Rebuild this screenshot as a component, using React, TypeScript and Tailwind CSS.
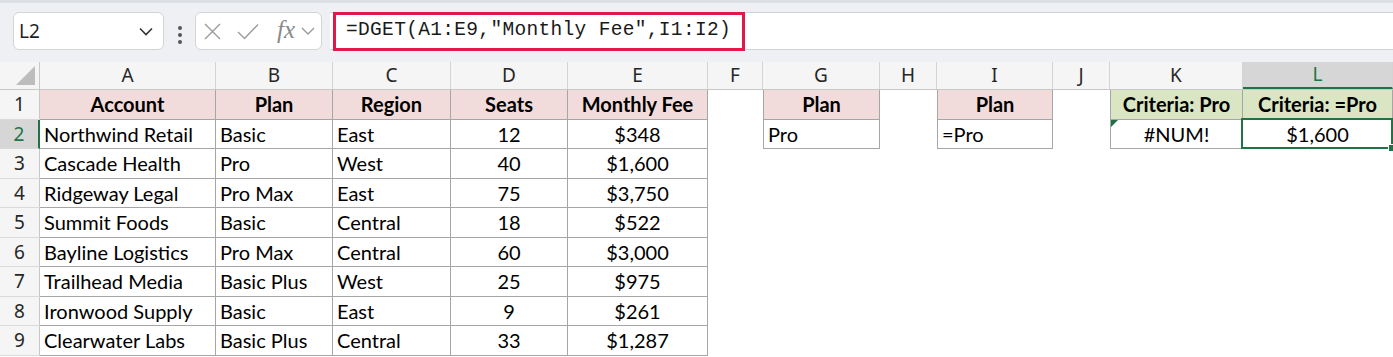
import React from 'react';

const cols = [
    { key: '', w: 40 },
    { key: 'A', w: 176 },
    { key: 'B', w: 117 },
    { key: 'C', w: 118 },
    { key: 'D', w: 117 },
    { key: 'E', w: 140 },
    { key: 'F', w: 55 },
    { key: 'G', w: 117 },
    { key: 'H', w: 57 },
    { key: 'I', w: 116 },
    { key: 'J', w: 57 },
    { key: 'K', w: 133 },
    { key: 'L', w: 150 },
];

const rows: [string, string, string, string, string][] = [
    ['Northwind Retail', 'Basic', 'East', '12', '$348'],
    ['Cascade Health', 'Pro', 'West', '40', '$1,600'],
    ['Ridgeway Legal', 'Pro Max', 'East', '75', '$3,750'],
    ['Summit Foods', 'Basic', 'Central', '18', '$522'],
    ['Bayline Logistics', 'Pro Max', 'Central', '60', '$3,000'],
    ['Trailhead Media', 'Basic Plus', 'West', '25', '$975'],
    ['Ironwood Supply', 'Basic', 'East', '9', '$261'],
    ['Clearwater Labs', 'Basic Plus', 'Central', '33', '$1,287'],
];

const cellFont = { fontFamily: 'Lato, "Open Sans", sans-serif' };

type CellProps = {
    w: number;
    children?: React.ReactNode;
    className?: string;
};

const Cell: React.FC<CellProps> = ({ w, children, className = '' }) => (
    <div
        className={`relative shrink-0 h-full flex items-center text-[20px] text-black whitespace-nowrap overflow-visible ${className}`}
        style={{ width: w }}
    >
        {children}
    </div>
);

const RowHead: React.FC<{ n: number; selected?: boolean }> = ({ n, selected }) => (
    <div
        className={`shrink-0 w-[40px] h-full flex items-center justify-center text-[19px] border-b border-[#dadada] ${
            selected
                ? 'bg-[#d6d6d6] text-[#217346] border-r-2 border-r-[#217346]'
                : 'bg-[#f5f5f5] text-[#262626] border-r border-r-[#c8c8c8]'
        }`}
        style={{ fontFamily: '"Noto Sans", sans-serif' }}
    >
        {n}
    </div>
);

const NameBox = () => (
    <div className="ml-[13px] mt-[12px] w-[151px] h-[38px] rounded-[6px] border border-[#d4d4d4] bg-white flex items-center pl-[5px] pr-[10px]">
        <span className="text-[19px] text-[#1f1f1f]" style={{ fontFamily: '"Noto Sans", sans-serif' }}>
            L2
        </span>
        <svg className="ml-auto" width="14" height="9" viewBox="0 0 14 9">
            <path d="M1 1.5 L7 7.5 L13 1.5" fill="none" stroke="#333" strokeWidth="1.6" />
        </svg>
    </div>
);

const FxBox = () => (
    <div className="ml-[13px] mt-[12px] w-[127px] h-[38px] rounded-[6px] border border-[#d4d4d4] bg-white flex items-center pl-[8px]">
        <svg width="17" height="17" viewBox="0 0 17 17">
            <path d="M1 1 L16 16 M16 1 L1 16" stroke="#9a9a9a" strokeWidth="1.4" />
        </svg>
        <svg className="ml-[16px]" width="22" height="17" viewBox="0 0 22 17">
            <path d="M1 9 L7.5 15.5 L21 1.5" fill="none" stroke="#9a9a9a" strokeWidth="1.4" />
        </svg>
        <span
            className="ml-[18px] text-[25px] italic text-[#8a8a8a] leading-none -mt-[3px]"
            style={{ fontFamily: '"Liberation Serif", serif' }}
        >
            fx
        </span>
        <svg className="ml-[6px]" width="14" height="8" viewBox="0 0 14 8">
            <path d="M1 1 L7 7 L13 1" fill="none" stroke="#9a9a9a" strokeWidth="1.4" />
        </svg>
    </div>
);

export default function App() {
    return (
        <div className="w-[1393px] h-[357px] overflow-hidden bg-white">
            {/* formula bar */}
            <div className="h-[62px] bg-[#eef0f3] border-t-[3px] border-[#dcdfe3] flex">
                <div className="flex items-start -mt-[3px]">
                    <NameBox />
                    <div className="ml-[14px] mt-[26px] flex flex-col gap-[3px]">
                        <span className="block w-[4px] h-[4px] rounded-full bg-[#555]" />
                        <span className="block w-[4px] h-[4px] rounded-full bg-[#555]" />
                        <span className="block w-[4px] h-[4px] rounded-full bg-[#555]" />
                    </div>
                    <FxBox />
                </div>
                <div className="ml-[8px] mt-[9px] h-[38px] flex-1 bg-white border-y border-[#cfd2d6] flex items-center">
                    <div
                        className="ml-[3px] h-[39px] w-[412px] border-[3px] border-[#e0194a] flex items-center pl-[10px] text-[19.5px] tracking-[0.33px] text-[#1a1a1a]"
                        style={{ fontFamily: '"Liberation Mono", monospace' }}
                    >
                        =DGET(A1:E9,"Monthly Fee",I1:I2)
                    </div>
                </div>
            </div>

            {/* column headers */}
            <div className="h-[28px] flex bg-[#f5f5f5] border-b border-[#c8c8c8]">
                {cols.map((c, i) =>
                    i === 0 ? (
                        <div key="corner" className="shrink-0 w-[40px] h-full relative border-r border-[#c8c8c8]">
                            <svg className="absolute left-[16px] top-[4px]" width="19" height="19" viewBox="0 0 19 19">
                                <path d="M19 0 L19 19 L0 19 Z" fill="#bdbdbd" />
                            </svg>
                        </div>
                    ) : (
                        <div
                            key={c.key}
                            className={`shrink-0 h-full flex items-center justify-center text-[19px] border-r border-[#d4d4d4] ${
                                c.key === 'L'
                                    ? 'bg-[#d6d6d6] text-[#217346] border-b-2 border-b-[#217346]'
                                    : 'text-[#262626]'
                            }`}
                            style={{ width: c.w, fontFamily: '"Noto Sans", sans-serif' }}
                        >
                            {c.key}
                        </div>
                    )
                )}
            </div>

            {/* row 1 */}
            <div className="h-[29.5px] flex" style={cellFont}>
                <RowHead n={1} />
                <Cell w={176} className="justify-center font-bold bg-[#f2dcdb] border-r border-b border-[#a6a6a6]">Account</Cell>
                <Cell w={117} className="justify-center font-bold bg-[#f2dcdb] border-r border-b border-[#a6a6a6]">Plan</Cell>
                <Cell w={118} className="justify-center font-bold bg-[#f2dcdb] border-r border-b border-[#a6a6a6]">Region</Cell>
                <Cell w={117} className="justify-center font-bold bg-[#f2dcdb] border-r border-b border-[#a6a6a6]">Seats</Cell>
                <Cell w={140} className="justify-center font-bold bg-[#f2dcdb] border-r border-b border-[#a6a6a6]">Monthly Fee</Cell>
                <Cell w={55} />
                <Cell w={117} className="justify-center font-bold bg-[#f2dcdb] border-l border-r border-b border-[#a6a6a6]">Plan</Cell>
                <Cell w={57} />
                <Cell w={116} className="justify-center font-bold bg-[#f2dcdb] border-l border-r border-b border-[#a6a6a6]">Plan</Cell>
                <Cell w={57} />
                <Cell w={133} className="justify-center font-bold bg-[#d9e5c3] border-l border-r border-b border-[#a6a6a6]">Criteria: Pro</Cell>
                <Cell w={150} className="justify-center font-bold bg-[#d9e5c3] border-r border-b border-[#a6a6a6]">Criteria: =Pro</Cell>
            </div>

            {/* rows 2..9 */}
            {rows.map((r, idx) => {
                const n = idx + 2;
                return (
                    <div key={n} className="h-[29.5px] flex" style={cellFont}>
                        <RowHead n={n} selected={n === 2} />
                        <Cell w={176} className="pl-[4px] border-r border-b border-[#a6a6a6]">{r[0]}</Cell>
                        <Cell w={117} className="pl-[4px] border-r border-b border-[#a6a6a6]">{r[1]}</Cell>
                        <Cell w={118} className="pl-[4px] border-r border-b border-[#a6a6a6]">{r[2]}</Cell>
                        <Cell w={117} className="justify-center border-r border-b border-[#a6a6a6]">{r[3]}</Cell>
                        <Cell w={140} className="justify-center border-r border-b border-[#a6a6a6]">{r[4]}</Cell>
                        <Cell w={55} />
                        {n === 2 ? (
                            <>
                                <Cell w={117} className="pl-[4px] border-l border-r border-b border-[#a6a6a6]">Pro</Cell>
                                <Cell w={57} />
                                <Cell w={116} className="pl-[4px] border-l border-r border-b border-[#a6a6a6]">=Pro</Cell>
                                <Cell w={57} />
                                <Cell w={133} className="justify-center border-l border-r border-b border-[#a6a6a6]">
                                    <svg className="absolute left-0 top-0" width="7" height="7" viewBox="0 0 7 7">
                                        <path d="M0 0 L7 0 L0 7 Z" fill="#1e7145" />
                                    </svg>
                                    #NUM!
                                </Cell>
                                <Cell w={150} className="justify-center border-r border-b border-[#a6a6a6]">
                                    <div className="absolute -left-[2px] -top-[2px] -right-[1px] -bottom-[1px] border-[2.5px] border-[#217346] pointer-events-none" />
                                    <div className="absolute -right-[4px] -bottom-[4px] w-[8px] h-[8px] bg-[#217346] border border-white" />
                                    $1,600
                                </Cell>
                            </>
                        ) : (
                            <>
                                <Cell w={117} />
                                <Cell w={57} />
                                <Cell w={116} />
                                <Cell w={57} />
                                <Cell w={133} />
                                <Cell w={150} />
                            </>
                        )}
                    </div>
                );
            })}
        </div>
    );
}
